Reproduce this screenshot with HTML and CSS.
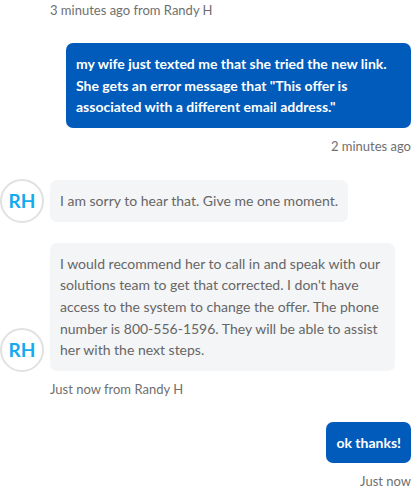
FILE: index.html
```html
<!DOCTYPE html>
<html>
<head>
<meta charset="utf-8">
<link rel="stylesheet" href="styles.css">
</head>
<body>
<div class="chat">
  <div class="group agent">
    <div class="meta">3 minutes ago from Randy H</div>
  </div>

  <div class="group own">
    <div class="bubble blue">my wife just texted me that she tried the new link. She gets an error message that "This offer is associated with a different email address."</div>
    <div class="meta">2 minutes ago</div>
  </div>

  <div class="group agent">
    <div class="row">
      <div class="avatar">RH</div>
      <div class="bubble gray">I am sorry to hear that. Give me one moment.</div>
    </div>
    <div class="row">
      <div class="avatar">RH</div>
      <div class="bubble gray">I would recommend her to call in and speak with our solutions team to get that corrected. I don't have access to the system to change the offer. The phone number is 800-556-1596. They will be able to assist her with the next steps.</div>
    </div>
    <div class="meta">Just now from Randy H</div>
  </div>

  <div class="group own">
    <div class="bubble blue">ok thanks!</div>
    <div class="meta">Just now</div>
  </div>
</div>
</body>
</html>
```

FILE: styles.css
```css
html, body {
  margin: 0;
  padding: 0;
  background: #ffffff;
}

body {
  font-family: Lato, "Open Sans", "Liberation Sans", sans-serif;
}

.chat {
  display: flex;
  flex-direction: column;
  gap: 25px;
  padding: 2px 9px 0 0;
}

.group {
  display: flex;
  flex-direction: column;
}

.group.own {
  align-items: flex-end;
}

.group.agent {
  align-items: flex-start;
  gap: 21px;
}

.meta {
  font-size: 13px;
  line-height: 16px;
  color: #6f6f6f;
}

.group.own .meta {
  margin-top: 10px;
}

.group.agent .meta {
  margin-left: 50px;
}

.row + .meta {
  margin-top: -11px;
}

.row {
  display: flex;
  align-items: flex-end;
  gap: 6px;
}

.avatar {
  flex: none;
  box-sizing: border-box;
  width: 44px;
  height: 44px;
  margin-bottom: -1px;
  border: 2px solid #e1e1e1;
  border-radius: 50%;
  display: flex;
  align-items: center;
  justify-content: center;
  font-size: 19px;
  font-weight: 700;
  color: #14aaf0;
  background: #ffffff;
}

.bubble {
  max-width: 345px;
  box-sizing: border-box;
  padding: 10px;
  border-radius: 7px;
  font-size: 14px;
  line-height: 21.6px;
}

.bubble.blue {
  background: #005bbb;
  color: #ffffff;
  font-weight: 700;
}

.bubble.gray {
  background: #f4f5f7;
  color: #666666;
}
```
